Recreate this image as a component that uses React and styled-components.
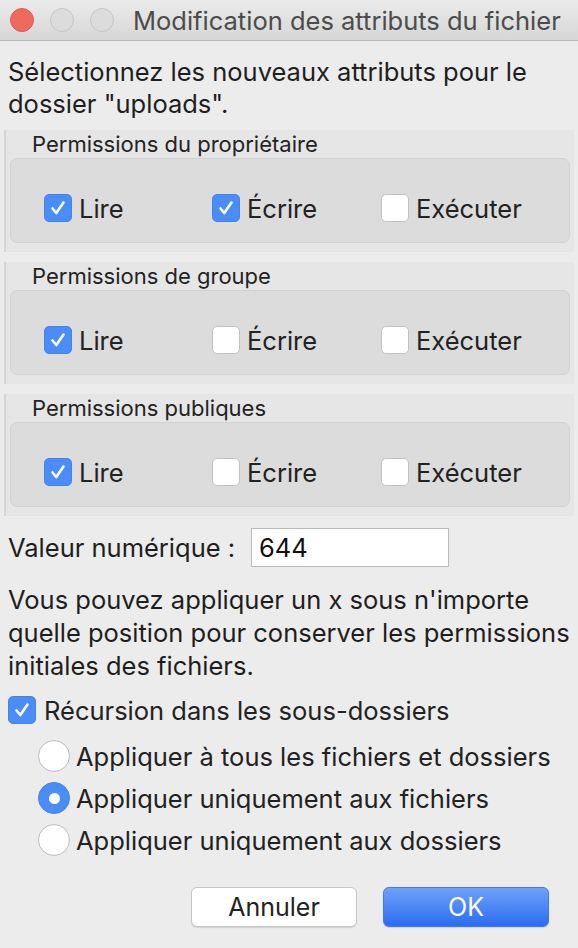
import React from 'react';
import styled, { createGlobalStyle } from 'styled-components';

const GlobalStyle = createGlobalStyle`
  html, body {
    margin: 0;
    padding: 0;
    background: #ececec;
  }
  body {
    font-family: Inter, "Liberation Sans", Arial, sans-serif;
    color: #222;
  }
`;

const Window = styled.div`
  width: 578px;
  height: 948px;
  background: #ececec;
  display: flex;
  flex-direction: column;
  overflow: hidden;
`;

const TitleBar = styled.div`
  height: 40px;
  border-bottom: 1px solid #b9b9b9;
  background: linear-gradient(#ebebeb, #d6d6d6);
  display: flex;
  align-items: center;
  padding-left: 10px;
  gap: 16px;
`;

const Light = styled.span`
  width: 24px;
  height: 24px;
  border-radius: 50%;
  box-sizing: border-box;
  background: ${p => (p.$close ? '#ef6a5e' : '#dcdcdc')};
  border: 1px solid ${p => (p.$close ? '#e0584c' : '#c6c6c6')};
  flex-shrink: 0;
`;

const Title = styled.div`
  margin-left: 3px;
  font-size: 25.5px;
  color: #4c4c4c;
  white-space: nowrap;
`;

const Content = styled.div`
  display: flex;
  flex-direction: column;
  padding: 15px 0 0;
`;

const Text = styled.p`
  margin: 0;
  padding: 0 4px 0 8px;
  font-size: 25.5px;
  line-height: 32px;
  color: #1e1e1e;
`;

const Groups = styled.div`
  display: flex;
  flex-direction: column;
  gap: 10px;
  margin-top: 10px;
`;

const Group = styled.div`
  margin: 0 4px;
  background: #e6e6e6;
  border-left: 2px solid #d6d6d6;
  padding: 0 4px 9px 4px;
`;

const GroupTitle = styled.div`
  height: 28px;
  line-height: 28px;
  padding-left: 22px;
  font-size: 22px;
  color: #232323;
`;

const Inner = styled.div`
  height: 85px;
  box-sizing: border-box;
  background: #dcdcdc;
  border: 1px solid #d2d2d2;
  border-radius: 7px;
  padding: 35px 0 0 33px;
  display: grid;
  grid-template-columns: 168px 169px auto;
  align-items: start;
`;

const Option = styled.label`
  display: flex;
  align-items: center;
  gap: ${p => p.$gap || 8}px;
  font-size: 25.5px;
  color: #222;
  height: ${p => p.$h || 28}px;
  white-space: nowrap;
`;

const Box = styled.span`
  width: 28px;
  height: 28px;
  box-sizing: border-box;
  border-radius: 5px;
  flex-shrink: 0;
  display: flex;
  align-items: center;
  justify-content: center;
  background: ${p => (p.$on ? '#4b8df6' : '#ffffff')};
  border: 1px solid ${p => (p.$on ? '#4583ea' : '#c2c2c2')};
`;

const Radio = styled.span`
  width: 32px;
  height: 32px;
  box-sizing: border-box;
  border-radius: 50%;
  flex-shrink: 0;
  display: flex;
  align-items: center;
  justify-content: center;
  background: ${p => (p.$on ? '#4b8df6' : '#ffffff')};
  border: 1px solid ${p => (p.$on ? '#4583ea' : '#bdbdbd')};

  &::after {
    content: '';
    display: ${p => (p.$on ? 'block' : 'none')};
    width: 11px;
    height: 11px;
    border-radius: 50%;
    background: #fff;
  }
`;

const ValueRow = styled.div`
  display: flex;
  align-items: center;
  margin-top: 12px;
  padding-left: 8px;
`;

const ValueLabel = styled.span`
  font-size: 25.5px;
  color: #1e1e1e;
  width: 243px;
  white-space: nowrap;
`;

const Input = styled.div`
  width: 198px;
  height: 39px;
  box-sizing: border-box;
  background: #fff;
  border: 1px solid #bababa;
  padding-left: 7px;
  font-size: 25.5px;
  line-height: 37px;
  color: #111;
`;

const Note = styled(Text)`
  margin-top: 16px;
  line-height: 33px;
`;

const Recursion = styled.div`
  margin-top: 14px;
  padding-left: 8px;
`;

const Radios = styled.div`
  display: flex;
  flex-direction: column;
  gap: 10px;
  margin-top: 16px;
  padding-left: 38px;
`;

const Buttons = styled.div`
  display: flex;
  justify-content: flex-end;
  gap: 26px;
  margin-top: 31px;
  padding-right: 29px;
`;

const Button = styled.button`
  width: 166px;
  height: 40px;
  border-radius: 6px;
  font-family: Inter, "Liberation Sans", Arial, sans-serif;
  font-size: 25px;
  padding: 0;
  cursor: pointer;
  background: ${p => (p.$primary ? 'linear-gradient(#6fa2f8, #2b6cf1)' : '#ffffff')};
  color: ${p => (p.$primary ? '#ffffff' : '#222')};
  border: 1px solid ${p => (p.$primary ? '#3f7ae8' : '#c6c6c6')};
  box-shadow: 0 1px 1px rgba(0, 0, 0, 0.12);
`;

const Check = () => (
  <svg width="18" height="18" viewBox="0 0 18 18">
    <path d="M3.5 9.5 L7.3 14 L14.5 3.5" fill="none" stroke="#fff" strokeWidth="2.6" strokeLinecap="round" strokeLinejoin="round" />
  </svg>
);

const CheckBox = ({ on, children, gap }) => (
  <Option $gap={gap}>
    <Box $on={on}>{on && <Check />}</Box>
    {children}
  </Option>
);

const groups = [
  { title: 'Permissions du propriétaire', values: [true, true, false] },
  { title: 'Permissions de groupe', values: [true, false, false] },
  { title: 'Permissions publiques', values: [true, false, false] },
];

const labels = ['Lire', 'Écrire', 'Exécuter'];

const radios = [
  { label: 'Appliquer à tous les fichiers et dossiers', on: false },
  { label: 'Appliquer uniquement aux fichiers', on: true },
  { label: 'Appliquer uniquement aux dossiers', on: false },
];

export default function App() {
  return (
    <Window>
      <GlobalStyle />
      <TitleBar>
        <Light $close />
        <Light />
        <Light />
        <Title>Modification des attributs du fichier</Title>
      </TitleBar>
      <Content>
        <Text>Sélectionnez les nouveaux attributs pour le dossier "uploads".</Text>
        <Groups>
          {groups.map(g => (
            <Group key={g.title}>
              <GroupTitle>{g.title}</GroupTitle>
              <Inner>
                {labels.map((l, i) => (
                  <CheckBox key={l} on={g.values[i]} gap={7}>{l}</CheckBox>
                ))}
              </Inner>
            </Group>
          ))}
        </Groups>
        <ValueRow>
          <ValueLabel>Valeur numérique :</ValueLabel>
          <Input>644</Input>
        </ValueRow>
        <Note>
          Vous pouvez appliquer un x sous n'importe quelle position pour conserver les permissions initiales des fichiers.
        </Note>
        <Recursion>
          <CheckBox on gap={8}>Récursion dans les sous-dossiers</CheckBox>
        </Recursion>
        <Radios>
          {radios.map(r => (
            <Option key={r.label} $gap={6} $h={32}>
              <Radio $on={r.on} />
              {r.label}
            </Option>
          ))}
        </Radios>
        <Buttons>
          <Button>Annuler</Button>
          <Button $primary>OK</Button>
        </Buttons>
      </Content>
    </Window>
  );
}
